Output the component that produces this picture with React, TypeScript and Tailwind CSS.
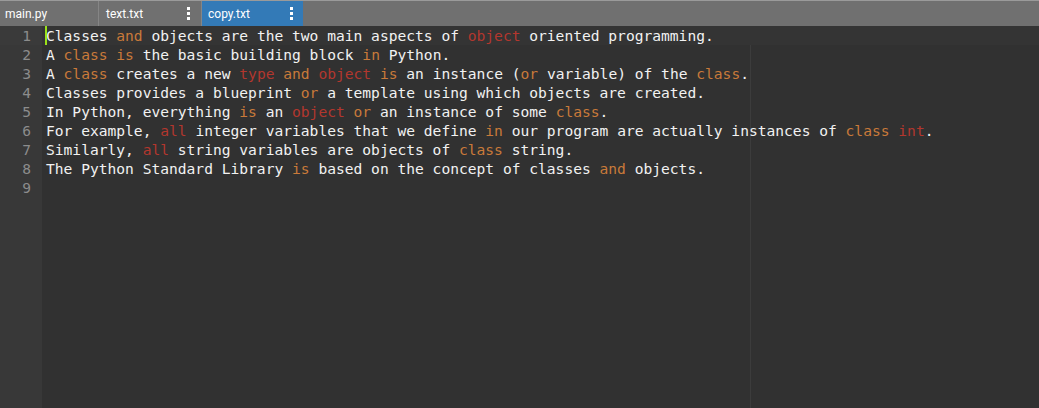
import React from "react";

type Tok = [string, "n" | "o" | "r"];

const lines: Tok[][] = [
  [["Classes ", "n"], ["and", "o"], [" objects are the two main aspects of ", "n"], ["object", "r"], [" oriented programming.", "n"]],
  [["A ", "n"], ["class", "o"], [" ", "n"], ["is", "o"], [" the basic building block ", "n"], ["in", "o"], [" Python.", "n"]],
  [["A ", "n"], ["class", "o"], [" creates a new ", "n"], ["type", "r"], [" ", "n"], ["and", "o"], [" ", "n"], ["object", "r"], [" ", "n"], ["is", "o"], [" an instance (", "n"], ["or", "o"], [" variable) of the ", "n"], ["class", "o"], [".", "n"]],
  [["Classes provides a blueprint ", "n"], ["or", "o"], [" a template using which objects are created.", "n"]],
  [["In Python, everything ", "n"], ["is", "o"], [" an ", "n"], ["object", "r"], [" ", "n"], ["or", "o"], [" an instance of some ", "n"], ["class", "o"], [".", "n"]],
  [["For example, ", "n"], ["all", "r"], [" integer variables that we define ", "n"], ["in", "o"], [" our program are actually instances of ", "n"], ["class", "o"], [" ", "n"], ["int", "r"], [".", "n"]],
  [["Similarly, ", "n"], ["all", "r"], [" string variables are objects of ", "n"], ["class", "o"], [" string.", "n"]],
  [["The Python Standard Library ", "n"], ["is", "o"], [" based on the concept of classes ", "n"], ["and", "o"], [" objects.", "n"]],
  [],
];

const color = { n: "text-[#f2f2f2]", o: "text-[#c97a3a]", r: "text-[#b3372e]" };

function Kebab() {
  return (
    <div className="flex flex-col gap-[2px]">
      <div className="w-[3px] h-[3px] bg-white" />
      <div className="w-[3px] h-[3px] bg-white" />
      <div className="w-[3px] h-[3px] bg-white" />
    </div>
  );
}

export default function App() {
  return (
    <div className="w-[1039px] h-[408px] flex flex-col bg-[#313131] overflow-hidden" style={{ fontFamily: "Roboto, Arial, sans-serif" }}>
      <div className="h-[26px] flex bg-[#707070] border-t border-[#9a9a9a] text-white text-[12px] shrink-0">
        <div className="w-[99px] flex items-center pl-[5px] border-r border-[#858585]">main.py</div>
        <div className="w-[103px] flex items-center justify-between pl-[7px] pr-[11px] border-r border-[#858585]">
          <span>text.txt</span>
          <Kebab />
        </div>
        <div className="w-[101px] flex items-center justify-between pl-[6px] pr-[10px] bg-[#337ab7]">
          <span>copy.txt</span>
          <Kebab />
        </div>
      </div>
      <div className="flex-1 flex relative">
        <div className="w-[42px] bg-[#383838] shrink-0">
          {lines.map((_, i) => (
            <div key={i} className={`h-[19px] leading-[19px] text-right pr-[11px] text-[#8c8c8c] text-[14.6px] ${i === 0 ? "bg-[#3a3a3a]" : ""}`} style={{ fontFamily: "'DejaVu Sans Mono', monospace" }}>
              {i + 1}
            </div>
          ))}
        </div>
        <div className="flex-1 relative">
          <div className="absolute left-[708px] top-[19px] bottom-0 w-px bg-[#3c3c3c]" />
          {lines.map((toks, i) => (
            <div key={i} className={`relative h-[19px] leading-[19px] pl-[4px] whitespace-pre text-[14.6px] ${i === 0 ? "bg-[#343434]" : ""}`} style={{ fontFamily: "'DejaVu Sans Mono', monospace" }}>
              {i === 0 && <div className="absolute left-[3px] top-0 w-[2px] h-[19px] bg-[#9be21a]" />}
              {toks.map(([t, c], j) => (
                <span key={j} className={color[c]}>{t}</span>
              ))}
            </div>
          ))}
        </div>
      </div>
    </div>
  );
}
